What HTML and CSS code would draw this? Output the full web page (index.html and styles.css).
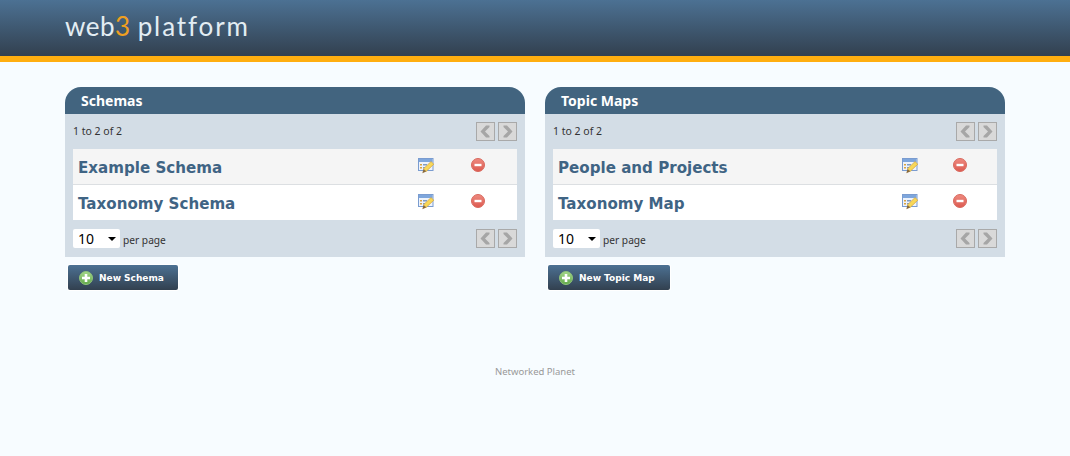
FILE: index.html
```html
<!DOCTYPE html>
<html lang="en">
  <head>
    <meta charset="UTF-8" />
    <title>web3 platform</title>
    <link rel="stylesheet" href="styles.css">
  </head>
  <body>
    <svg class="defs" width="0" height="0" aria-hidden="true">
      <defs>
        <linearGradient id="delFill" x1="0" y1="0" x2="0" y2="1">
          <stop offset="0" stop-color="#ee8a80" />
          <stop offset="1" stop-color="#dc5a50" />
        </linearGradient>
        <linearGradient id="addFill" x1="0" y1="0" x2="0" y2="1">
          <stop offset="0" stop-color="#a5d88a" />
          <stop offset="1" stop-color="#62a84a" />
        </linearGradient>
        <symbol id="icon-edit" viewBox="0 0 16 16">
          <rect x="0.5" y="0.5" width="14.5" height="12" fill="#eef3fb" stroke="#7a9cd0" />
          <rect x="1" y="1" width="13.5" height="3" fill="#7ea6dc" />
          <rect x="2" y="6" width="2" height="1.5" fill="#d9a441" />
          <rect x="5" y="6" width="4" height="1.5" fill="#7f9cc4" />
          <rect x="2" y="9" width="2" height="1.5" fill="#d9a441" />
          <rect x="5" y="9" width="2" height="1.5" fill="#7f9cc4" />
          <path d="M13 3.6 L15.8 6.2 L8.2 13.4 L5.4 10.9 Z" fill="#f8d858" stroke="#d0a040" stroke-width="0.7" />
          <path d="M5.4 10.9 L8.2 13.4 L4.4 15.2 Z" fill="#8a6a3a" />
        </symbol>
        <symbol id="icon-del" viewBox="0 0 14 14">
          <circle cx="7" cy="7" r="6.5" fill="url(#delFill)" stroke="#d8695e" />
          <rect x="3.5" y="5.8" width="7" height="2.4" fill="#fff" />
        </symbol>
        <symbol id="icon-add" viewBox="0 0 14 14">
          <circle cx="7" cy="7" r="6.5" fill="url(#addFill)" stroke="#8fc47a" />
          <path d="M5.7 3 H8.3 V5.7 H11 V8.3 H8.3 V11 H5.7 V8.3 H3 V5.7 H5.7 Z" fill="#fff" />
        </symbol>
        <symbol id="icon-prev" viewBox="0 0 17 17">
          <path d="M9 2.5 L3.5 8.5 L9 14.5 H12.5 V13 L8 8.5 L12.5 4 V2.5 Z" fill="#a6a6a6" />
        </symbol>
        <symbol id="icon-next" viewBox="0 0 17 17">
          <path d="M8 2.5 L13.5 8.5 L8 14.5 H4.5 V13 L9 8.5 L4.5 4 V2.5 Z" fill="#a6a6a6" />
        </symbol>
      </defs>
    </svg>

    <div class="header">
      <div class="logo"><span class="logo-web">web<span class="logo-num">3</span></span><span class="logo-name">platform</span></div>
    </div>

    <div class="content">
      <div class="panel panel-schemas">
        <h2 class="panel-title">Schemas</h2>
        <div class="panel-body">
          <div class="pager pager-top">
            <span>1 to 2 of 2</span>
            <div class="pager-btns">
              <a class="page-btn"><svg width="17" height="17"><use href="#icon-prev" /></svg></a>
              <a class="page-btn"><svg width="17" height="17"><use href="#icon-next" /></svg></a>
            </div>
          </div>
          <div class="rows">
            <div class="row row-odd">
              <a class="row-name">Example Schema</a>
              <svg class="ico-edit" width="16" height="16"><use href="#icon-edit" /></svg>
              <svg class="ico-del" width="14" height="14"><use href="#icon-del" /></svg>
            </div>
            <div class="row">
              <a class="row-name">Taxonomy Schema</a>
              <svg class="ico-edit" width="16" height="16"><use href="#icon-edit" /></svg>
              <svg class="ico-del" width="14" height="14"><use href="#icon-del" /></svg>
            </div>
          </div>
          <div class="pager pager-bottom">
            <div class="per-page">
              <span class="select"><span>10</span><i class="select-arrow"></i></span>
              <span class="per-label">per page</span>
            </div>
            <div class="pager-btns">
              <a class="page-btn"><svg width="17" height="17"><use href="#icon-prev" /></svg></a>
              <a class="page-btn"><svg width="17" height="17"><use href="#icon-next" /></svg></a>
            </div>
          </div>
        </div>
        <a class="new-btn"><svg width="14" height="14"><use href="#icon-add" /></svg>New Schema</a>
      </div>

      <div class="panel panel-maps">
        <h2 class="panel-title">Topic Maps</h2>
        <div class="panel-body">
          <div class="pager pager-top">
            <span>1 to 2 of 2</span>
            <div class="pager-btns">
              <a class="page-btn"><svg width="17" height="17"><use href="#icon-prev" /></svg></a>
              <a class="page-btn"><svg width="17" height="17"><use href="#icon-next" /></svg></a>
            </div>
          </div>
          <div class="rows">
            <div class="row row-odd">
              <a class="row-name">People and Projects</a>
              <svg class="ico-edit" width="16" height="16"><use href="#icon-edit" /></svg>
              <svg class="ico-del" width="14" height="14"><use href="#icon-del" /></svg>
            </div>
            <div class="row">
              <a class="row-name">Taxonomy Map</a>
              <svg class="ico-edit" width="16" height="16"><use href="#icon-edit" /></svg>
              <svg class="ico-del" width="14" height="14"><use href="#icon-del" /></svg>
            </div>
          </div>
          <div class="pager pager-bottom">
            <div class="per-page">
              <span class="select"><span>10</span><i class="select-arrow"></i></span>
              <span class="per-label">per page</span>
            </div>
            <div class="pager-btns">
              <a class="page-btn"><svg width="17" height="17"><use href="#icon-prev" /></svg></a>
              <a class="page-btn"><svg width="17" height="17"><use href="#icon-next" /></svg></a>
            </div>
          </div>
        </div>
        <a class="new-btn"><svg width="14" height="14"><use href="#icon-add" /></svg>New Topic Map</a>
      </div>
    </div>

    <div class="footer">Networked Planet</div>
  </body>
</html>
```

FILE: styles.css
```css
body {
  margin: 0;
  background-color: #f7fcff;
  font-family: "Noto Sans", Tahoma, sans-serif;
  font-size: 10.5px;
  color: #333;
}
.defs {
  position: absolute;
}
.header {
  height: 56px;
  padding-left: 65px;
  background: linear-gradient(#4c7193, #32404f);
  border-bottom: 6px solid #ffae10;
}
.logo {
  display: flex;
  gap: 7px;
  font-family: Lato, sans-serif;
  font-weight: 400;
  font-size: 26px;
  line-height: 52px;
  color: #e3edf3;
}
.logo-web {
  letter-spacing: 0.5px;
}
.logo-name {
  letter-spacing: 1.9px;
}
.logo-num {
  color: #f0a020;
}
.content {
  display: flex;
  gap: 20px;
  padding: 25px 65px 0;
}
.panel {
  width: 460px;
}
.panel-title {
  margin: 0;
  height: 27px;
  padding-left: 16px;
  border-radius: 16px 16px 0 0;
  background-color: #42647f;
  color: #fff;
  font-size: 14px;
  line-height: 27px;
  font-weight: bold;
}
.panel-body {
  height: 143px;
  padding: 0 8px;
  background-color: #d3dde6;
}
.pager {
  display: flex;
  justify-content: space-between;
  align-items: center;
}
.pager-top {
  height: 35px;
  line-height: 33px;
}
.pager-bottom {
  height: 37px;
}
.pager-btns {
  display: flex;
  gap: 3px;
}
.page-btn {
  display: flex;
  width: 17px;
  height: 17px;
  border: 1px solid #a9a9a9;
  background-color: #d9d9d9;
}
.rows {
  background-color: #fff;
}
.row {
  display: flex;
  align-items: center;
  height: 35px;
  padding-left: 5px;
}
.row-odd {
  background-color: #f5f5f5;
  border-bottom: 1px solid #dcdfe2;
}
.row-name {
  flex: 1;
  padding-top: 2px;
  font-family: "DejaVu Sans", Verdana, sans-serif;
  color: #3f6484;
  font-size: 15.1px;
  font-weight: bold;
}
.ico-edit {
  margin-top: -2px;
}
.ico-del {
  margin-top: -3px;
}
.panel-schemas .ico-edit {
  margin-right: 37px;
}
.panel-schemas .ico-del {
  margin-right: 32px;
}
.panel-maps .ico-edit {
  margin-right: 35px;
}
.panel-maps .ico-del {
  margin-right: 30px;
}
.per-page {
  display: flex;
  align-items: center;
  gap: 3px;
}
.per-label {
  padding-top: 3px;
  font-size: 10.2px;
}
.select {
  display: flex;
  align-items: center;
  justify-content: space-between;
  box-sizing: border-box;
  width: 47px;
  height: 19px;
  padding: 0 4px 0 5px;
  border-radius: 2px;
  background-color: #fff;
  color: #000;
  font-size: 14px;
}
.select-arrow {
  width: 0;
  height: 0;
  margin-top: 1px;
  border-top: 4px solid #000;
  border-left: 4px solid transparent;
  border-right: 4px solid transparent;
}
.new-btn {
  display: inline-flex;
  align-items: center;
  gap: 6px;
  height: 25px;
  margin: 8px 0 0 3px;
  padding: 0 14px 0 11px;
  border-radius: 2px;
  background: linear-gradient(#4c7193, #32404f);
  box-shadow: 0 0 0 1px #fff;
  font-family: "DejaVu Sans", Verdana, sans-serif;
  color: #fff;
  font-size: 9px;
  font-weight: bold;
}
.panel-maps .new-btn {
  padding-right: 15.5px;
}
.footer {
  margin-top: 75px;
  text-align: center;
  color: #999;
  font-size: 9.5px;
}
```
